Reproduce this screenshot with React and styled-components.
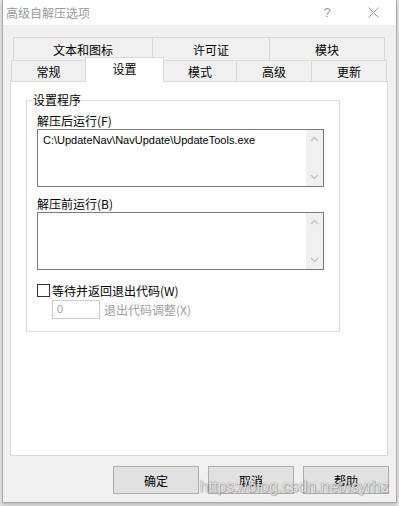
import React from 'react';
import styled, { createGlobalStyle } from 'styled-components';

const GlobalStyle = createGlobalStyle`
  html, body {
    margin: 0;
    padding: 0;
    background: #e4e4e4;
  }
  body {
    font-family: "Liberation Sans", "Noto Sans CJK SC", sans-serif;
    font-size: 12px;
    color: #000;
  }
`;

const Screen = styled.div`
  width: 399px;
  height: 506px;
  overflow: hidden;
`;

const Window = styled.div`
  position: relative;
  margin-left: 2px;
  width: 395px;
  height: 503px;
  box-sizing: border-box;
  border: 1px solid #a9a9a9;
  border-top: none;
  background: #f0f0f0;
  display: flex;
  flex-direction: column;
  box-shadow: 0 2px 3px rgba(0, 0, 0, 0.18);
`;

const TitleBar = styled.div`
  height: 25px;
  background: #fff;
  display: flex;
  align-items: center;
`;

const Title = styled.div`
  flex: 1;
  padding-left: 3px;
  color: #999;
  font-family: "Noto Sans CJK SC", sans-serif;
  font-size: 12px;
  line-height: 25px;
`;

const CaptionButton = styled.div`
  width: 46px;
  height: 25px;
  display: flex;
  align-items: center;
  justify-content: center;
  color: #999;
  font-family: "Liberation Sans", sans-serif;
  font-size: 13px;
`;

const Tabs = styled.div`
  margin: 12px 8px 0 7px;
  display: flex;
  flex-direction: column;
`;

const TabRow = styled.div`
  display: flex;
  height: ${({ h }) => h}px;
  padding-left: ${({ inset }) => inset}px;
`;

const Tab = styled.div`
  position: relative;
  box-sizing: border-box;
  width: ${({ w }) => w}px;
  height: ${({ active, h }) => (active ? h + 4 : h)}px;
  margin-top: ${({ active }) => (active ? -3 : 0)}px;
  margin-left: -1px;
  &:first-child { margin-left: 0; }
  border: 1px solid #d9d9d9;
  border-bottom: none;
  background: ${({ active }) => (active ? '#fff' : '#f0f0f0')};
  z-index: ${({ active }) => (active ? 2 : 0)};
  display: flex;
  align-items: center;
  justify-content: center;
  padding-bottom: ${({ active }) => (active ? 3 : 0)}px;
  font-family: "Noto Sans CJK SC", sans-serif;
  font-size: 12px;
`;

const Panel = styled.div`
  position: relative;
  z-index: 1;
  height: 375px;
  box-sizing: border-box;
  border: 1px solid #d9d9d9;
  background: #fff;
  padding: 11px 0 0 15px;
`;

const Group = styled.fieldset`
  margin: 0;
  width: 314px;
  box-sizing: border-box;
  border: 1px solid #dcdcdc;
  padding: 0 15px 12px 10px;
`;

const Legend = styled.legend`
  margin-left: -5px;
  padding: 0 1px;
  line-height: 14px;
  font-family: "Noto Sans CJK SC", sans-serif;
`;

const FieldLabel = styled.div`
  height: 16px;
  line-height: 16px;
  margin-top: ${({ gap }) => gap}px;
  font-family: "Noto Sans CJK SC", sans-serif;
`;

const TextBox = styled.div`
  height: 58px;
  box-sizing: border-box;
  border: 1px solid #7a7a7a;
  background: #fff;
  display: flex;
`;

const TextValue = styled.div`
  flex: 1;
  padding: 2px 0 0 5px;
  line-height: 16px;
  font-family: "Liberation Sans", sans-serif;
  font-size: 11px;
`;

const ScrollTrack = styled.div`
  width: 17px;
  background: #f0f0f0;
  display: flex;
  flex-direction: column;
  justify-content: space-between;
  align-items: center;
  padding: 6px 0;
`;

const CheckRow = styled.div`
  margin-top: 12px;
  height: 16px;
  display: flex;
  align-items: center;
  gap: 2px;
  font-family: "Noto Sans CJK SC", sans-serif;
`;

const CheckBox = styled.div`
  width: 13px;
  height: 13px;
  box-sizing: border-box;
  border: 1px solid #333;
  background: #fff;
`;

const SpinRow = styled.div`
  margin: 2px 0 0 15px;
  display: flex;
  align-items: center;
  gap: 4px;
`;

const SpinBox = styled.div`
  width: 48px;
  height: 19px;
  box-sizing: border-box;
  border: 1px solid #cccccc;
  background: #fff;
  color: #a0a0a0;
  padding-left: 4px;
  line-height: 17px;
  font-family: "Liberation Sans", sans-serif;
  font-size: 11px;
`;

const DisabledText = styled.span`
  color: #a0a0a0;
  font-family: "Noto Sans CJK SC", sans-serif;
`;

const ButtonBar = styled.div`
  margin: 10px 7px 0 0;
  display: flex;
  justify-content: flex-end;
  gap: 9px;
`;

const Button = styled.div`
  width: 86px;
  height: 28px;
  box-sizing: border-box;
  border: 1px solid #adadad;
  background: #e1e1e1;
  display: flex;
  align-items: center;
  justify-content: center;
  font-family: "Noto Sans CJK SC", sans-serif;
`;

const Watermark = styled.div`
  position: absolute;
  right: 7px;
  bottom: 6px;
  font-family: "Liberation Sans", sans-serif;
  font-size: 16px;
  color: rgba(255, 255, 255, 0.8);
  text-shadow: 0 0 1px rgba(0, 0, 0, 0.55), 1px 1px 1px rgba(0, 0, 0, 0.2);
  pointer-events: none;
`;

const Chevron = ({ up }) => (
  <svg width="9" height="6" viewBox="0 0 9 6">
    <path
      d={up ? 'M1 5 L4.5 1.5 L8 5' : 'M1 1 L4.5 4.5 L8 1'}
      fill="none"
      stroke="#c2c2c2"
      strokeWidth="1.4"
    />
  </svg>
);

const CloseIcon = () => (
  <svg width="11" height="11" viewBox="0 0 11 11">
    <path d="M0.5 0.5 L10.5 10.5 M10.5 0.5 L0.5 10.5" stroke="#999" strokeWidth="1" />
  </svg>
);

const MultiLine = ({ value }) => (
  <TextBox>
    <TextValue>{value}</TextValue>
    <ScrollTrack>
      <Chevron up />
      <Chevron />
    </ScrollTrack>
  </TextBox>
);

const backTabs = [
  { label: '文本和图标', w: 140 },
  { label: '许可证', w: 118 },
  { label: '模块', w: 116 },
];

const frontTabs = [
  { label: '常规', w: 75 },
  { label: '设置', w: 79, active: true },
  { label: '模式', w: 74 },
  { label: '高级', w: 76 },
  { label: '更新', w: 76 },
];

export default function App() {
  return (
    <>
      <GlobalStyle />
      <Screen>
        <Window>
          <TitleBar>
            <Title>高级自解压选项</Title>
            <CaptionButton>?</CaptionButton>
            <CaptionButton><CloseIcon /></CaptionButton>
          </TitleBar>

          <Tabs>
            <TabRow h={23} inset={3}>
              {backTabs.map((t) => (
                <Tab key={t.label} w={t.w} h={23}>{t.label}</Tab>
              ))}
            </TabRow>
            <TabRow h={21} inset={1}>
              {frontTabs.map((t) => (
                <Tab key={t.label} w={t.w} h={21} active={t.active}>{t.label}</Tab>
              ))}
            </TabRow>
            <Panel>
              <Group>
                <Legend>设置程序</Legend>
                <FieldLabel gap={6}>解压后运行(F)</FieldLabel>
                <MultiLine value="C:\UpdateNav\NavUpdate\UpdateTools.exe" />
                <FieldLabel gap={9}>解压前运行(B)</FieldLabel>
                <MultiLine value="" />
                <CheckRow>
                  <CheckBox />
                  <span>等待并返回退出代码(W)</span>
                </CheckRow>
                <SpinRow>
                  <SpinBox>0</SpinBox>
                  <DisabledText>退出代码调整(X)</DisabledText>
                </SpinRow>
              </Group>
            </Panel>
          </Tabs>

          <ButtonBar>
            <Button>确定</Button>
            <Button>取消</Button>
            <Button>帮助</Button>
          </ButtonBar>

          <Watermark>https://blog.csdn.net/lsyrhz</Watermark>
        </Window>
      </Screen>
    </>
  );
}
